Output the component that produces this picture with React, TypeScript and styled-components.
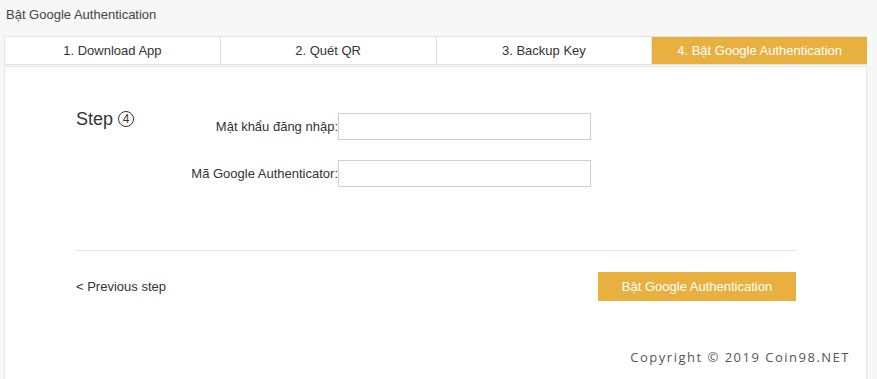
import styled, { createGlobalStyle } from 'styled-components';

const GlobalStyle = createGlobalStyle`
  html, body {
    margin: 0;
    padding: 0;
    background: #f7f7f7;
    font-family: Arial, "Liberation Sans", sans-serif;
  }
`;

const Page = styled.div`
  width: 877px;
  height: 379px;
  overflow: hidden;
  padding: 0 10px 0 4px;
  box-sizing: border-box;
`;

const Title = styled.h1`
  margin: 0;
  padding: 7px 0 0 2px;
  height: 36px;
  box-sizing: border-box;
  font-size: 13px;
  font-weight: normal;
  color: #444;
`;

const Tabs = styled.div`
  display: grid;
  grid-template-columns: repeat(4, 1fr);
  gap: 1px;
  background: #e2e2e2;
  border: 1px solid #e2e2e2;
  border-right: none;
  height: 27px;
`;

const Tab = styled.div<{ $active?: boolean }>`
  display: flex;
  align-items: center;
  justify-content: center;
  font-size: 13px;
  color: ${(p) => (p.$active ? '#fff' : '#333')};
  background: ${(p) => (p.$active ? '#e8b03f' : '#fff')};
`;

const Panel = styled.div`
  margin-top: 1px;
  background: #fff;
  border: 1px solid #e6e6e6;
  border-bottom: none;
  height: 320px;
  padding: 42px 70px 0 71px;
  box-sizing: border-box;
`;

const StepRow = styled.div`
  display: flex;
  height: 141px;
`;

const StepTitle = styled.div`
  width: 112px;
  font-size: 18px;
  line-height: 20px;
  color: #333;
  display: flex;
  align-items: flex-start;
  gap: 5px;
`;

const Circled = styled.span`
  display: inline-flex;
  align-items: center;
  justify-content: center;
  width: 14px;
  height: 14px;
  border: 1px solid #333;
  border-radius: 50%;
  font-size: 12px;
  line-height: 1;
  margin-top: 2px;
`;

const Form = styled.div`
  display: flex;
  flex-direction: column;
  gap: 20px;
  padding-top: 4px;
`;

const Field = styled.label`
  display: flex;
  align-items: center;
`;

const Label = styled.span`
  width: 150px;
  text-align: right;
  font-size: 13px;
  color: #333;
`;

const Input = styled.input`
  width: 253px;
  height: 27px;
  box-sizing: border-box;
  border: 1px solid #cfcfcf;
  margin: 0;
  outline: none;
`;

const Divider = styled.hr`
  margin: 0;
  border: none;
  border-top: 1px solid #e5e5e5;
`;

const Actions = styled.div`
  display: flex;
  justify-content: space-between;
  align-items: center;
  margin-top: 21px;
`;

const BackLink = styled.a`
  font-size: 13px;
  color: #333;
  text-decoration: none;
`;

const PrimaryButton = styled.button`
  width: 198px;
  height: 29px;
  border: none;
  background: #e8b03f;
  color: #fff;
  font-family: Arial, "Liberation Sans", sans-serif;
  font-size: 13px;
  padding: 0;
`;

const Copyright = styled.div`
  text-align: right;
  margin-top: 47px;
  margin-right: -54px;
  font-family: "Open Sans", sans-serif;
  font-size: 13px;
  letter-spacing: 1.5px;
  color: #555;
`;

export default function App() {
  return (
    <>
      <GlobalStyle />
      <Page>
        <Title>Bật Google Authentication</Title>
        <Tabs>
          <Tab>1. Download App</Tab>
          <Tab>2. Quét QR</Tab>
          <Tab>3. Backup Key</Tab>
          <Tab $active>4. Bật Google Authentication</Tab>
        </Tabs>
        <Panel>
          <StepRow>
            <StepTitle>
              Step <Circled>4</Circled>
            </StepTitle>
            <Form>
              <Field>
                <Label>Mật khẩu đăng nhập:</Label>
                <Input type="password" />
              </Field>
              <Field>
                <Label>Mã Google Authenticator:</Label>
                <Input type="text" />
              </Field>
            </Form>
          </StepRow>
          <Divider />
          <Actions>
            <BackLink href="#">&lt; Previous step</BackLink>
            <PrimaryButton>Bật Google Authentication</PrimaryButton>
          </Actions>
          <Copyright>Copyright © 2019 Coin98.NET</Copyright>
        </Panel>
      </Page>
    </>
  );
}
